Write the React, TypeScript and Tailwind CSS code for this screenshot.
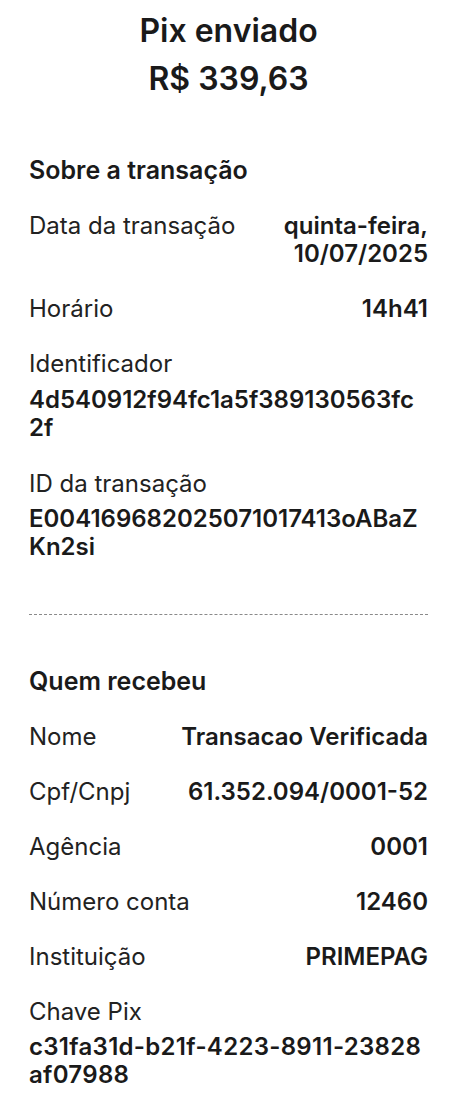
export default function App() {
  const recebedor = [
    { label: "Nome", value: "Transacao Verificada" },
    { label: "Cpf/Cnpj", value: "61.352.094/0001-52" },
    { label: "Agência", value: "0001" },
    { label: "Número conta", value: "12460" },
    { label: "Instituição", value: "PRIMEPAG" },
  ];

  return (
    <div className="min-h-screen bg-white text-[#1a1a1a] font-['Inter',sans-serif] px-[29px] pt-[12px] pb-6">
      <div className="text-center">
        <h1 className="text-[32px] font-semibold leading-[38px]">Pix enviado</h1>
        <p className="text-[32px] font-semibold leading-[38px] mt-[10px]">R$ 339,63</p>
      </div>

      <section className="mt-[57px]">
        <h2 className="text-[25px] font-semibold leading-[30px]">Sobre a transação</h2>

        <div className="mt-[27px] flex justify-between gap-6">
          <span className="text-[24px] leading-[28px] text-[#222]">Data da transação</span>
          <span className="text-[24px] leading-[28px] font-semibold text-right">
            quinta-feira,
            <br />
            10/07/2025
          </span>
        </div>

        <div className="mt-[27px] flex justify-between gap-6">
          <span className="text-[24px] leading-[28px] text-[#222]">Horário</span>
          <span className="text-[24px] leading-[28px] font-semibold text-right">14h41</span>
        </div>

        <div className="mt-[27px]">
          <p className="text-[24px] leading-[28px] text-[#222]">Identificador</p>
          <p className="mt-[8px] text-[24px] leading-[28px] font-semibold break-all">
            4d540912f94fc1a5f389130563fc2f
          </p>
        </div>

        <div className="mt-[28px]">
          <p className="text-[24px] leading-[28px] text-[#222]">ID da transação</p>
          <p className="mt-[7px] text-[24px] leading-[28px] font-semibold break-all">
            E004169682025071017413oABaZKn2si
          </p>
        </div>
      </section>

      <div className="mt-[53px] border-t border-dashed border-[#8a8a8a]" />

      <section className="mt-[51px]">
        <h2 className="text-[25px] font-semibold leading-[30px]">Quem recebeu</h2>

        {recebedor.map((row) => (
          <div key={row.label} className="mt-[27px] flex justify-between gap-6">
            <span className="text-[24px] leading-[28px] text-[#222]">{row.label}</span>
            <span className="text-[24px] leading-[28px] font-semibold text-right">{row.value}</span>
          </div>
        ))}

        <div className="mt-[27px]">
          <p className="text-[24px] leading-[28px] text-[#222]">Chave Pix</p>
          <p className="mt-[7px] text-[24px] leading-[28px] font-semibold break-all tracking-[0.3px]">
            c31fa31d-b21f-4223-8911-23828af07988
          </p>
        </div>
      </section>
    </div>
  );
}
